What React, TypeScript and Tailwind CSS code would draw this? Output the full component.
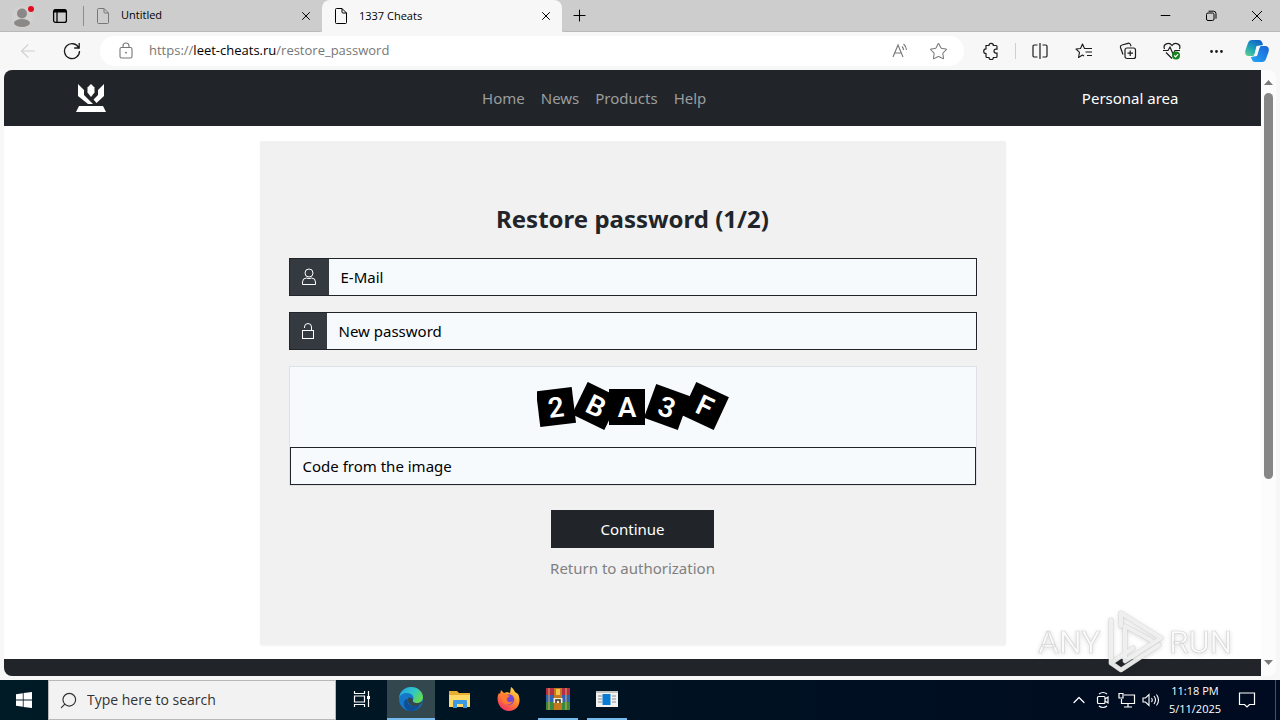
import type { ReactNode } from 'react';
import { ArrowLeft, X, Plus, Minus, Star, Ellipsis, ChevronUp, Search } from 'lucide-react';

const navLinks = ['Home', 'News', 'Products', 'Help'];

const captcha = [
  { char: '2', x: 19, y: 25, angle: -7 },
  { char: 'B', x: 59, y: 24, angle: 26 },
  { char: 'A', x: 90, y: 25, angle: 0 },
  { char: '3', x: 130, y: 25, angle: 20 },
  { char: 'F', x: 168, y: 24, angle: 25 },
];

function FileIcon({ className }: { className: string }) {
  return (
    <svg className={className} viewBox="0 0 14 18" width="14" height="18" fill="none" stroke="currentColor">
      <path d="M2.5 1.5h5.5l4.5 4.5v9.5a1 1 0 0 1-1 1h-9a1 1 0 0 1-1-1v-13a1 1 0 0 1 1-1zM8 1.5v3.5a1 1 0 0 0 1 1h3.5" />
    </svg>
  );
}

function Tab({ title, active }: { title: string; active?: boolean }) {
  return (
    <div
      className={
        active
          ? 'flex w-60 items-center rounded-t-lg bg-[#f7f7f7] pl-3 pr-2 text-black'
          : 'flex w-[238px] items-center rounded-br-sm border-b border-[#b9b9b9] pl-3 pr-2 text-black'
      }
    >
      <FileIcon className={active ? 'text-black' : 'text-[#777]'} />
      <span className="ml-[11px] flex-1 text-[11px]">{title}</span>
      <button aria-label={`Close ${title}`} className="flex w-4 justify-center">
        <X size={14} strokeWidth={1.7} />
      </button>
    </div>
  );
}

function TabStrip() {
  return (
    <div className="flex h-8 shrink-0 bg-[#cdcdcd]">
      <div className="flex w-[84px] items-center border-b border-[#b9b9b9] pl-3">
        <button aria-label="Profile" className="flex">
          <svg width="24" height="28" viewBox="0 0 24 28">
            <circle cx="10" cy="15" r="11" fill="#d3d1cf" />
            <circle cx="10" cy="11.5" r="5" fill="#8b8987" />
            <ellipse cx="10" cy="21" rx="8" ry="4" fill="#8b8987" />
            <circle cx="19" cy="7" r="3" fill="#e00b1c" />
          </svg>
        </button>
        <button aria-label="Tab actions" className="ml-4 flex">
          <svg width="16" height="16" viewBox="0 0 16 16" fill="none" stroke="#000" strokeWidth="1.3">
            <rect x="1.6" y="1.6" width="12.8" height="12.8" rx="2" />
            <path d="M2 3h12" strokeWidth="3" />
            <path d="M5 4v10" />
          </svg>
        </button>
        <span className="ml-auto h-5 w-px bg-[#8c8c8c]" />
      </div>
      <Tab title="Untitled" />
      <Tab title="1337 Cheats" active />
      <div className="flex flex-1 items-center rounded-bl-sm border-b border-[#b9b9b9] pl-2">
        <button aria-label="New tab">
          <Plus size={19} strokeWidth={1.3} />
        </button>
        <div className="ml-auto flex">
          <button aria-label="Minimize" className="flex w-[46px] justify-center">
            <Minus size={15} strokeWidth={1.6} />
          </button>
          <button aria-label="Restore" className="flex w-[46px] items-center justify-center">
            <svg width="12" height="12" viewBox="0 0 12 12" fill="none" stroke="#000">
              <rect x="1.5" y="3" width="7.5" height="7.5" rx="1.5" />
              <path d="M3.5 1.2h5a2.5 2.5 0 0 1 2.5 2.5v5" />
            </svg>
          </button>
          <button aria-label="Close" className="flex w-[46px] items-center justify-center">
            <svg width="12" height="12" viewBox="0 0 12 12" stroke="#000">
              <path d="M1 1l10 10M11 1L1 11" />
            </svg>
          </button>
        </div>
      </div>
    </div>
  );
}

function ToolButton({ label, children }: { label: string; children: ReactNode }) {
  return (
    <button aria-label={label} className="flex w-11 shrink-0 items-center justify-center text-[#1b1b1b]">
      {children}
    </button>
  );
}

function Toolbar() {
  return (
    <div className="flex h-[38px] shrink-0 items-center bg-[#f7f7f7] pl-[6px] pr-1">
      <button aria-label="Back" className="flex w-11 justify-center text-[#cfcfcf]">
        <ArrowLeft size={22} strokeWidth={1.2} />
      </button>
      <ToolButton label="Refresh">
        <svg width="18" height="18" viewBox="0 0 18 18" fill="none" stroke="currentColor" strokeWidth="1.3">
          <path d="M15.8 6A7.5 7.5 0 1 0 16.5 9M16.2 1v5h-5" />
        </svg>
      </ToolButton>
      <div className="ml-[6px] mr-[5px] flex h-[30px] flex-1 items-center rounded-full bg-white pl-[18px] pr-4 text-[#777]">
        <svg width="16" height="18" viewBox="0 0 16 18" fill="none" stroke="currentColor" strokeWidth="1.1">
          <rect x="2" y="5.5" width="12" height="10.5" rx="1.5" />
          <path d="M5 5.5V4a3 3 0 0 1 6 0v1.5" />
          <circle cx="8" cy="10.7" r="0.9" fill="currentColor" stroke="none" />
        </svg>
        <span className="ml-[15px] flex-1 text-[13px]">
          https://<span className="text-black">leet-cheats.ru</span>/restore_password
        </span>
        <button aria-label="Read aloud" className="mr-5 flex">
          <svg width="18" height="18" viewBox="0 0 18 18" fill="none" stroke="currentColor" strokeWidth="1.1">
            <path d="M2 15L7 3l5 12M3.7 11h6.6M11 4.5a5 5 0 0 1 1.5 3.5M12.5 2a8 8 0 0 1 3 6" />
          </svg>
        </button>
        <button aria-label="Add to favorites">
          <Star size={19} strokeWidth={1.3} />
        </button>
      </div>
      <ToolButton label="Extensions">
        <svg width="18" height="18" viewBox="0 0 18 18" fill="none" stroke="currentColor" strokeWidth="1.2">
          <path d="M4 3.5h3a2.2 2.2 0 0 1 4.4 0H14a1 1 0 0 1 1 1v2.6h-1a2 2 0 0 0 0 4h1v3.4a1 1 0 0 1-1 1h-2.6a2.2 2.2 0 0 1-4.4 0H5a1 1 0 0 1-1-1v-3a2.2 2.2 0 0 1 0-4.6z" />
        </svg>
      </ToolButton>
      <span className="mx-[2px] h-4 w-px bg-[#cfcfcf]" />
      <ToolButton label="Split screen">
        <svg width="18" height="18" viewBox="0 0 18 18" fill="none" stroke="currentColor" strokeWidth="1.2">
          <path d="M6.5 3H3.3A1.3 1.3 0 0 0 2 4.3v9.4A1.3 1.3 0 0 0 3.3 15h3.2M11.5 3h3.2A1.3 1.3 0 0 1 16 4.3v9.4a1.3 1.3 0 0 1-1.3 1.3h-3.2M9 1v16" />
        </svg>
      </ToolButton>
      <ToolButton label="Favorites">
        <svg width="18" height="18" viewBox="0 0 18 18" fill="none" stroke="currentColor" strokeWidth="1.1" strokeLinejoin="round">
          <path d="M12 6.5H9.5L7.5 2 5.500 6.500l-4.500.5 3.500 3.300L3.500 15.500l4-2.500 1.500 1M10.500 6.500H17M10.500 10H17M12 13.500h5" />
        </svg>
      </ToolButton>
      <ToolButton label="Collections">
        <svg width="18" height="18" viewBox="0 0 18 18" fill="none" stroke="currentColor" strokeWidth="1.2">
          <rect x="6" y="6" width="10.5" height="10.5" rx="2" />
          <path d="M11.2 8.500v5.500M8.500 11.200H14M4 12.500L1.500 5.500A2 2 0 0 1 3 3l6-1.700a2 2 0 0 1 2.500 1.400l.5 1.500" />
        </svg>
      </ToolButton>
      <ToolButton label="Browser essentials">
        <svg width="20" height="20" viewBox="0 0 20 20" fill="none" stroke="currentColor" strokeWidth="1.2">
          <path d="M2.500 8C.5 3 7 .5 10 4.500 13 .5 19.500 3 17.500 8M4 11.500l6 6M1 9.500h5l2-3.500 3 7 2-3.500h5" />
          <circle cx="14" cy="14.500" r="4" fill="#16831f" stroke="none" />
          <path d="M12.200 14.500l1.400 1.300 2.500-2.600" stroke="#fff" />
        </svg>
      </ToolButton>
      <ToolButton label="Settings and more">
        <Ellipsis size={17} strokeWidth={2} />
      </ToolButton>
      <button aria-label="Copilot" className="flex w-[38px] shrink-0 justify-center">
        <svg width="24" height="24" viewBox="0 0 24 24">
          <defs>
            <linearGradient id="copilotLeft" x1="0" y1="1" x2="0.6" y2="0">
              <stop offset="0" stopColor="#62d488" />
              <stop offset="0.5" stopColor="#1fa5b8" />
              <stop offset="1" stopColor="#1267c8" />
            </linearGradient>
            <linearGradient id="copilotRight" x1="1" y1="0" x2="0" y2="1">
              <stop offset="0" stopColor="#1b62d8" />
              <stop offset="1" stopColor="#22a8f2" />
            </linearGradient>
          </defs>
          <path d="M7 1h7q3 0 4 5l-6 1-3 10H4q-5 0-3.500-6L3 4q1-3 4-3z" fill="url(#copilotLeft)" />
          <path d="M17 23h-7q-3 0-4-5l6-1 3-10h5q5 0 3.500 6L21 20q-1 3-4 3z" fill="url(#copilotRight)" />
          <path d="M12 7h4q-1 0-2 3l-2 6q0 1-2 1H8q1 0 2-3l1-5q.3-2 1-2z" fill="#f7f7f7" />
        </svg>
      </button>
    </div>
  );
}

function SiteHeader() {
  return (
    <header className="bg-[#212529]">
      <div className="mx-auto flex h-14 max-w-[1140px] items-center justify-between px-3">
        <a href="#" aria-label="1337 Cheats" className="mr-3">
          <svg width="32" height="32" viewBox="0 0 32 32" fill="#fff">
            <path d="M3 2l6 6v5l9 9h-5L3 14z" />
            <path d="M29 2l-6 6v5l-4.500 4.500 3 3.500L29 14z" />
            <path d="M16 2l3.500 3.500v5L16 15l-3.500-4.500v-5z" />
            <path d="M4 24h24l3 6H1z" />
          </svg>
        </a>
        <nav className="flex">
          {navLinks.map((link) => (
            <a key={link} href="#" className="px-2 text-[#9b9d9f]">
              {link}
            </a>
          ))}
        </nav>
        <a href="#" className="px-3 text-white">
          Personal area
        </a>
      </div>
    </header>
  );
}

function Captcha() {
  return (
    <svg width="192" height="50" viewBox="0 0 192 50" role="img" aria-label="Captcha">
      {captcha.map((c) => (
        <g key={c.x} transform={`translate(${c.x} ${c.y}) rotate(${c.angle})`}>
          <rect x="-18" y="-18" width="36" height="36" />
          <text y="10" textAnchor="middle" fill="#fff" className="font-['Roboto',sans-serif] text-[28px] font-semibold">
            {c.char}
          </text>
        </g>
      ))}
    </svg>
  );
}

function RestoreForm() {
  return (
    <form className="mx-auto mt-[15px] flex w-full max-w-[746px] flex-col rounded-xs bg-[#f1f1f1] px-[29px] pt-[63px] pb-[65px] shadow-xs">
      <h1 className="mb-6 text-center text-2xl leading-[30px] font-bold text-[#212529]">Restore password (1/2)</h1>
      <div className="mb-4 flex h-[38px] border border-[#212529] bg-[#f7fafd]">
        <label htmlFor="email" aria-label="E-Mail" className="flex w-[39px] items-center justify-center bg-[#343a40] text-white">
          <svg width="16" height="18" viewBox="0 0 16 18" fill="none" stroke="currentColor">
            <circle cx="8" cy="5" r="4" />
            <path d="M1.500 16.500v-2.500a4 4 0 0 1 4-4q2.500 1.300 5 0a4 4 0 0 1 4 4v2.500z" />
          </svg>
        </label>
        <input id="email" type="text" placeholder="E-Mail" className="min-w-0 flex-1 px-3 placeholder:text-black" />
      </div>
      <div className="mb-4 flex h-[38px] border border-[#212529] bg-[#f7fafd]">
        <label htmlFor="password" aria-label="New password" className="flex w-[37px] items-center justify-center bg-[#343a40] text-white">
          <svg width="14" height="18" viewBox="0 0 14 18" fill="none" stroke="currentColor">
            <rect x="1.500" y="8.500" width="11" height="8" />
            <path d="M3.500 6V5a3.500 3.500 0 0 1 7 0v3.500" />
          </svg>
        </label>
        <input id="password" type="password" placeholder="New password" className="min-w-0 flex-1 px-3 placeholder:text-black" />
      </div>
      <div className="flex flex-col border border-[#dee2e6] bg-[#f7fafd]">
        <div className="flex h-20 items-center justify-center">
          <Captcha />
        </div>
        <input
          aria-label="Code from the image"
          placeholder="Code from the image"
          className="h-[38px] border border-[#212529] px-3 placeholder:text-black"
        />
      </div>
      <button type="submit" className="mt-6 h-[38px] w-[163px] self-center bg-[#212529] text-white">
        Continue
      </button>
      <a href="#" className="mt-2 self-center text-[#808080]">
        Return to authorization
      </a>
    </form>
  );
}

function Scrollbar() {
  return (
    <div className="flex w-[15px] flex-col items-center bg-[#fcfcfc] py-2">
      <svg width="9" height="15" viewBox="0 0 9 15" className="shrink-0 fill-[#7a7a7a]">
        <path d="M4.500 2L9 7H0z" />
      </svg>
      <div className="min-h-0 w-[9px] flex-1">
        <div className="h-[69%] rounded-full bg-[#868686]" />
      </div>
      <svg width="9" height="15" viewBox="0 0 9 15" className="shrink-0 fill-[#7a7a7a]">
        <path d="M4.500 12L0 7h9z" />
      </svg>
    </div>
  );
}

function Watermark() {
  return (
    <svg width="204" height="70" viewBox="0 0 204 70" className="pointer-events-none absolute right-10 bottom-11 drop-shadow-sm">
      <g fill="#fff" fillOpacity="0.75" stroke="#d5d5d5" strokeWidth="0.7" className="font-['Roboto',sans-serif] text-[32px]">
        <text x="2" y="47">ANY</text>
        <text x="133" y="47">RUN</text>
      </g>
      <g fill="none" strokeLinejoin="round" strokeLinecap="round">
        <path d="M85 20V7l40 25-36 23V20l26 14M75 14v43l10 7 38-25M75 57l22-15" stroke="#c9c9c9" strokeOpacity="0.7" strokeWidth="5" />
        <path d="M85 20V7l40 25-36 23V20l26 14M75 14v43l10 7 38-25M75 57l22-15" stroke="#f5f5f5" strokeOpacity="0.85" strokeWidth="4" />
      </g>
    </svg>
  );
}

function TaskButton({ label, active, open, children }: { label: string; active?: boolean; open?: boolean; children: ReactNode }) {
  return (
    <button aria-label={label} className={active ? 'flex w-12 flex-col items-center bg-[#33474f]' : 'flex w-12 flex-col items-center'}>
      <span className="flex flex-1 items-center">{children}</span>
      <span className={active ? 'h-[2px] w-full bg-[#76b9ed]' : open ? 'h-[2px] w-10 bg-[#76b9ed]' : 'h-[2px]'} />
    </button>
  );
}

function Taskbar() {
  return (
    <div className="flex h-10 shrink-0 bg-linear-to-r from-[#001b25] to-[#000a20] text-white">
      <button aria-label="Start" className="flex w-12 items-center justify-center">
        <svg width="16" height="16" viewBox="0 0 16 16" fill="#fff">
          <path d="M0 2.200l6.800-1v6.400H0zM7.600 1.100L16 0v7.600H7.600zM0 8.400h6.800v6.400l-6.800-1zM7.600 8.400H16V16l-8.400-1.100z" />
        </svg>
      </button>
      <div className="flex w-72 items-center border border-[#b8b8b8] bg-[#f2f2f2] pl-[10px] text-[#333]">
        <Search size={19} strokeWidth={1.5} className="-scale-x-100" />
        <input
          aria-label="Search"
          placeholder="Type here to search"
          className="ml-[9px] min-w-0 flex-1 text-sm placeholder:text-[#333]"
        />
      </div>
      <div className="ml-[2px] flex gap-px">
        <TaskButton label="Task view">
          <svg width="18" height="18" viewBox="0 0 18 18" fill="none" stroke="#fff" strokeWidth="1.2">
            <path d="M1.500 1v2.500h10V1M1.500 17v-2.500h10V17M1.500 6h10v6h-10zM15.500 1v5M15.500 9v8" />
            <path d="M14 6h3v3h-3z" fill="#fff" stroke="none" />
          </svg>
        </TaskButton>
        <TaskButton label="Edge" active>
          <svg width="24" height="24" viewBox="0 0 24 24">
            <defs>
              <linearGradient id="edgeTop" x1="0" y1="0" x2="1" y2="0.5">
                <stop offset="0" stopColor="#229fe0" />
                <stop offset="0.6" stopColor="#31c6c8" />
                <stop offset="1" stopColor="#62d957" />
              </linearGradient>
            </defs>
            <circle cx="12" cy="12" r="12" fill="#1478c8" />
            <path d="M9 12c-2 6 5 9 12 6-2 4-6 6-9 6-5 0-8-5-7-9 .5-2 2-3 4-3z" fill="#0e4f96" />
            <path d="M0 11C1 4 6 0 12 0c7 0 12 5 12 10 0 4-3 6-6 6-3 0-5-1-4-3 2-4-2-7-6-7-4 0-7 2-8 5z" fill="url(#edgeTop)" />
            <path d="M14 13c-1 2 1 3 4 3 2 0 4-.6 5.500-2.500Q23 17 21 18c-6 3-13 0-12-6 0-2 5-2 5 1z" fill="#33474f" />
          </svg>
        </TaskButton>
        <TaskButton label="File Explorer">
          <svg width="22" height="18" viewBox="0 0 22 18">
            <path d="M0 1h8l2 2h11v14H0z" fill="#e9ad32" />
            <path d="M0 5h21v12H0z" fill="#ffd968" />
            <path d="M4 18v-7q0-1 1-1h12q1 0 1 1v7h-4v-4H8v4z" fill="#3c9be0" />
          </svg>
        </TaskButton>
        <TaskButton label="Firefox">
          <svg width="24" height="24" viewBox="0 0 24 24">
            <defs>
              <linearGradient id="fox" x1="0.8" y1="0" x2="0.2" y2="1">
                <stop offset="0" stopColor="#ffe64a" />
                <stop offset="0.45" stopColor="#ff8a2b" />
                <stop offset="1" stopColor="#f52b6b" />
              </linearGradient>
            </defs>
            <path d="M4 3l3 3 3-1 3 1 1-6c2 1 3 3 4 5l3 2c4 8 0 17-9 17C4 24-1 16 1 8l1-2 1 1z" fill="url(#fox)" />
            <circle cx="12" cy="12.500" r="5.200" fill="#7446d8" />
            <path d="M4 8c4-2 7 0 9 1l-3 2c-1 4 3 5 6 3-2 5-9 4-11 0z" fill="#ff7a30" />
          </svg>
        </TaskButton>
        <TaskButton label="WinRAR" open>
          <svg width="24" height="22" viewBox="0 0 24 22">
            <path d="M0 0h24v7H0z" fill="#b62d48" />
            <path d="M0 7h24v7H0z" fill="#2e63bb" />
            <path d="M0 14h24v8H0z" fill="#38883e" />
            <path d="M3 0v22M20 0v22" stroke="#d9b355" strokeWidth="1" />
            <path d="M8 0h8v22H8z" fill="#c4781f" />
            <path d="M10 1h4v6h-4z" fill="#f6c248" />
            <path d="M7.500 10h9v5h-9z" fill="#f5e7c5" />
            <path d="M10 15v-3h4v3" fill="none" stroke="#333" strokeWidth="1.5" />
          </svg>
        </TaskButton>
        <TaskButton label="Application" open>
          <svg width="22" height="16" viewBox="0 0 22 16">
            <path d="M0 0h22v16H0z" fill="#f2f2f2" />
            <path d="M0 0h22v2H0z" fill="#c2c2c2" />
            <path d="M2 5h4M2 8h4M2 11h4M16 5h4M16 8h4M16 11h4" stroke="#8b8b8b" />
            <path d="M6.500 3h8v11h-8z" fill="#087bd4" />
          </svg>
        </TaskButton>
      </div>
      <div className="ml-auto flex items-center">
        <button aria-label="Show hidden icons" className="flex w-6 justify-center">
          <ChevronUp size={20} strokeWidth={1.5} />
        </button>
        <button aria-label="Meet now" className="flex w-6 justify-center">
          <svg width="14" height="18" viewBox="0 0 14 18" fill="none" stroke="#fff" strokeWidth="1.2">
            <rect x="1.500" y="5.500" width="7.500" height="7" rx="1" />
            <path d="M9 8l3-2v6l-3-2M3 3q4-3 8 0M3 15q4 3 8 0" />
          </svg>
        </button>
        <button aria-label="Network" className="flex w-6 justify-center">
          <svg width="18" height="16" viewBox="0 0 18 16" fill="none" stroke="#fff" strokeWidth="1.2">
            <path d="M6 3h10.500v8.500H3.500V7M10 12v3M6 15h8M1 1.500h4V6H1z" />
          </svg>
        </button>
        <button aria-label="Volume" className="flex w-6 justify-center">
          <svg width="18" height="16" viewBox="0 0 18 16" fill="none" stroke="#fff" strokeWidth="1.1">
            <path d="M1 6h2.500L7 2.500v11L3.500 10H1zM9.500 6q1.500 2 0 4M12 4q3 4 0 8M14.500 2.500q4 5.500 0 11" />
          </svg>
        </button>
        <div className="w-16 text-center text-[11px] leading-[18px]">
          <div>11:18 PM</div>
          <div>5/11/2025</div>
        </div>
        <button aria-label="Notifications" className="flex w-10 justify-center">
          <svg width="18" height="18" viewBox="0 0 18 18" fill="none" stroke="#fff" strokeWidth="1.2">
            <path d="M1.500 2h15v11.500h-5L9 16l-2.500-2.500h-5z" />
          </svg>
        </button>
        <span className="ml-2 mr-1 h-10 w-px bg-[#45505c]" />
      </div>
    </div>
  );
}

export default function App() {
  return (
    <div className="relative flex min-h-screen flex-col bg-[#f7f7f7] font-['Open_Sans',sans-serif]">
      <TabStrip />
      <Toolbar />
      <div className="mx-1 mb-1 flex flex-1 overflow-hidden rounded-lg bg-white">
        <main className="flex flex-1 flex-col font-['Noto_Sans',sans-serif] text-[15px] leading-6">
          <SiteHeader />
          <RestoreForm />
          <footer className="mt-[14px] min-h-4 flex-1 bg-[#212529]" />
        </main>
        <Scrollbar />
      </div>
      <Taskbar />
      <Watermark />
    </div>
  );
}
